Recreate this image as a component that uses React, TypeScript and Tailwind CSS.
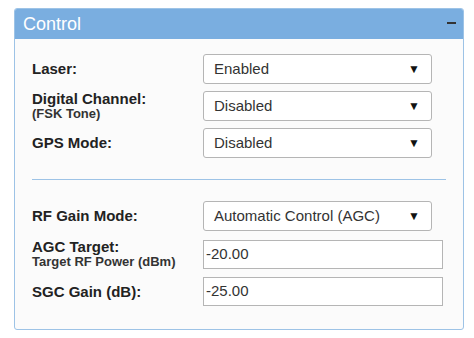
function SelectBox({ value }: { value: string }) {
  return (
    <div className="flex h-[30px] w-[229px] items-center justify-between rounded-[3px] border border-[#b5b5b5] bg-white pl-[10px] pr-[11px] text-[15px] text-[#333]">
      <span>{value}</span>
      <span className="text-[12px] text-[#111]">▼</span>
    </div>
  );
}

function InputBox({ value }: { value: string }) {
  return (
    <div className="flex h-[29px] w-[240px] items-center border border-[#b5b5b5] bg-white pl-[2px] text-[15px] text-[#333]">
      {value}
    </div>
  );
}

function Row({ label, sub, children }: { label: string; sub?: string; children: React.ReactNode }) {
  return (
    <div className="flex items-center">
      <div className="flex w-[171px] flex-col text-[#222]">
        <span className="text-[15px] font-bold leading-[16px]">{label}</span>
        {sub && <span className="text-[13px] font-bold leading-[14px] text-[#333]">{sub}</span>}
      </div>
      {children}
    </div>
  );
}

export default function App() {
  return (
    <div className="h-[338px] w-[474px] bg-white pl-[14px] pt-[8px] font-['Liberation_Sans',Arial,sans-serif]">
      <div className="w-[450px] overflow-hidden rounded-[3px] border border-[#9dc3e6] bg-[#fbfbfb]">
        <div className="flex h-[30px] items-center justify-between bg-[#7aaee0] pl-[8px] pr-[7px]">
          <span className="text-[18px] text-white">Control</span>
          <span className="mb-[2px] h-[1.5px] w-[9px] bg-[#333]"></span>
        </div>
        <div className="px-[17px] pb-[23px] pt-[15px]">
          <div className="flex flex-col gap-[7px]">
            <Row label="Laser:">
              <SelectBox value="Enabled" />
            </Row>
            <Row label="Digital Channel:" sub="(FSK Tone)">
              <SelectBox value="Disabled" />
            </Row>
            <Row label="GPS Mode:">
              <SelectBox value="Disabled" />
            </Row>
          </div>
          <div className="my-[21px] h-px bg-[#9dc3e6]"></div>
          <div className="flex flex-col gap-[8px]">
            <Row label="RF Gain Mode:">
              <SelectBox value="Automatic Control (AGC)" />
            </Row>
            <Row label="AGC Target:" sub="Target RF Power (dBm)">
              <InputBox value="-20.00" />
            </Row>
            <Row label="SGC Gain (dB):">
              <InputBox value="-25.00" />
            </Row>
          </div>
        </div>
      </div>
    </div>
  );
}
